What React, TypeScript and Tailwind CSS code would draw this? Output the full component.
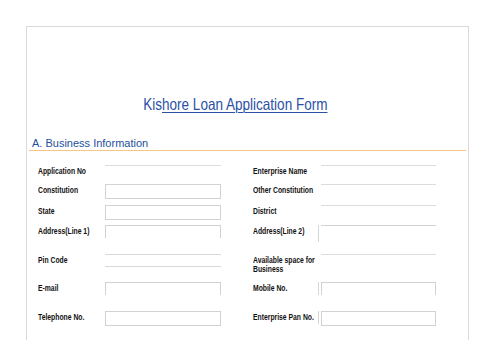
import React from 'react'

type Kind = 'line' | 'box' | 'open' | 'double' | 'tickTop' | 'tickOpen' | 'tickBox'

type Row = {
  h: string
  left: string
  lIn: Kind
  right: React.ReactNode
  rIn: Kind
}

const ROWS: Row[] = [
  { h: 'h-[19px]', left: 'Application No', lIn: 'line', right: 'Enterprise Name', rIn: 'line' },
  { h: 'h-[21px]', left: 'Constitution', lIn: 'box', right: 'Other Constitution', rIn: 'line' },
  { h: 'h-[20px]', left: 'State', lIn: 'box', right: 'District', rIn: 'line' },
  { h: 'h-[29px]', left: 'Address(Line 1)', lIn: 'open', right: 'Address(Line 2)', rIn: 'tickTop' },
  { h: 'h-[28px]', left: 'Pin Code', lIn: 'double', right: <>Available space for<br />Business</>, rIn: 'line' },
  { h: 'h-[29px]', left: 'E-mail', lIn: 'open', right: 'Mobile No.', rIn: 'tickOpen' },
  { h: 'h-[20px]', left: 'Telephone No.', lIn: 'box', right: 'Enterprise Pan No.', rIn: 'tickBox' },
]

function Field({ kind }: { kind: Kind }) {
  if (kind === 'line') return <div className="h-[12px] border-t border-[#dcdcdc]" />
  if (kind === 'box') return <div className="h-[15px] border border-[#d2d2d2] bg-white" />
  if (kind === 'open') return <div className="h-[13px] border border-b-0 border-[#d2d2d2]" />
  if (kind === 'double') return <div className="h-[13px] border-y border-[#d8d8d8]" />
  // right side fields with the little tick at their left
  return (
    <div className="flex gap-[2px]">
      <div className={`w-px bg-[#d6d6d6] ${kind === 'tickTop' ? 'h-[17px]' : 'h-[13px]'}`} />
      <div className={`flex-1 ${kind === 'tickTop' ? 'h-[12px] border-t border-[#d2d2d2]' : kind === 'tickOpen' ? 'h-[13px] border border-b-0 border-[#d2d2d2]' : 'h-[15px] border border-[#d2d2d2]'}`} />
    </div>
  )
}

// squeezed label text, the form uses a narrow face
function Label({ children, w }: { children: React.ReactNode; w: string }) {
  return (
    <div className={`${w} pt-[2px] text-[8.3px] font-bold leading-[9px] text-[#111]`}>
      <span className="inline-block origin-left scale-x-[0.82] whitespace-nowrap">{children}</span>
    </div>
  )
}

export default function App() {
  return (
    <div className="h-[340px] overflow-hidden bg-white pt-[26px] px-[26px]" style={{ fontFamily: '"Liberation Sans", Arial, sans-serif' }}>
      <div className="h-[320px] w-[443px] border border-b-0 border-[#d9d9d9]">
        <div className="pt-[67px] pr-[24px] text-center text-[16.5px] leading-[20px] text-[#2b51a6]">
          <span className="inline-block scale-x-[0.82] whitespace-nowrap">
            <span>Kis</span><span className="underline decoration-1 underline-offset-[2px]">hore Loan Application Form</span>
          </span>
        </div>

        <div className="mt-[22px] mx-[2px] border-b border-[#f6c683]">
          <div className="pl-[3px] text-[11px] leading-[14px] text-[#24509d]">A. Business Information</div>
        </div>

        <div className="mt-[14px] pl-[11px]">
          {ROWS.map((r, i) => (
            <div key={i} className={`flex items-start ${r.h}`}>
              <Label w="w-[67px]">{r.left}</Label>
              <div className="w-[116px]"><Field kind={r.lIn} /></div>
              <div className="w-[32px]" />
              <Label w="w-[65px]">{r.right}</Label>
              <div className="w-[118px]">
                {r.rIn === 'line'
                  ? <div className="ml-[3px]"><Field kind="line" /></div>
                  : <Field kind={r.rIn} />}
              </div>
            </div>
          ))}
        </div>
      </div>
    </div>
  )
}
